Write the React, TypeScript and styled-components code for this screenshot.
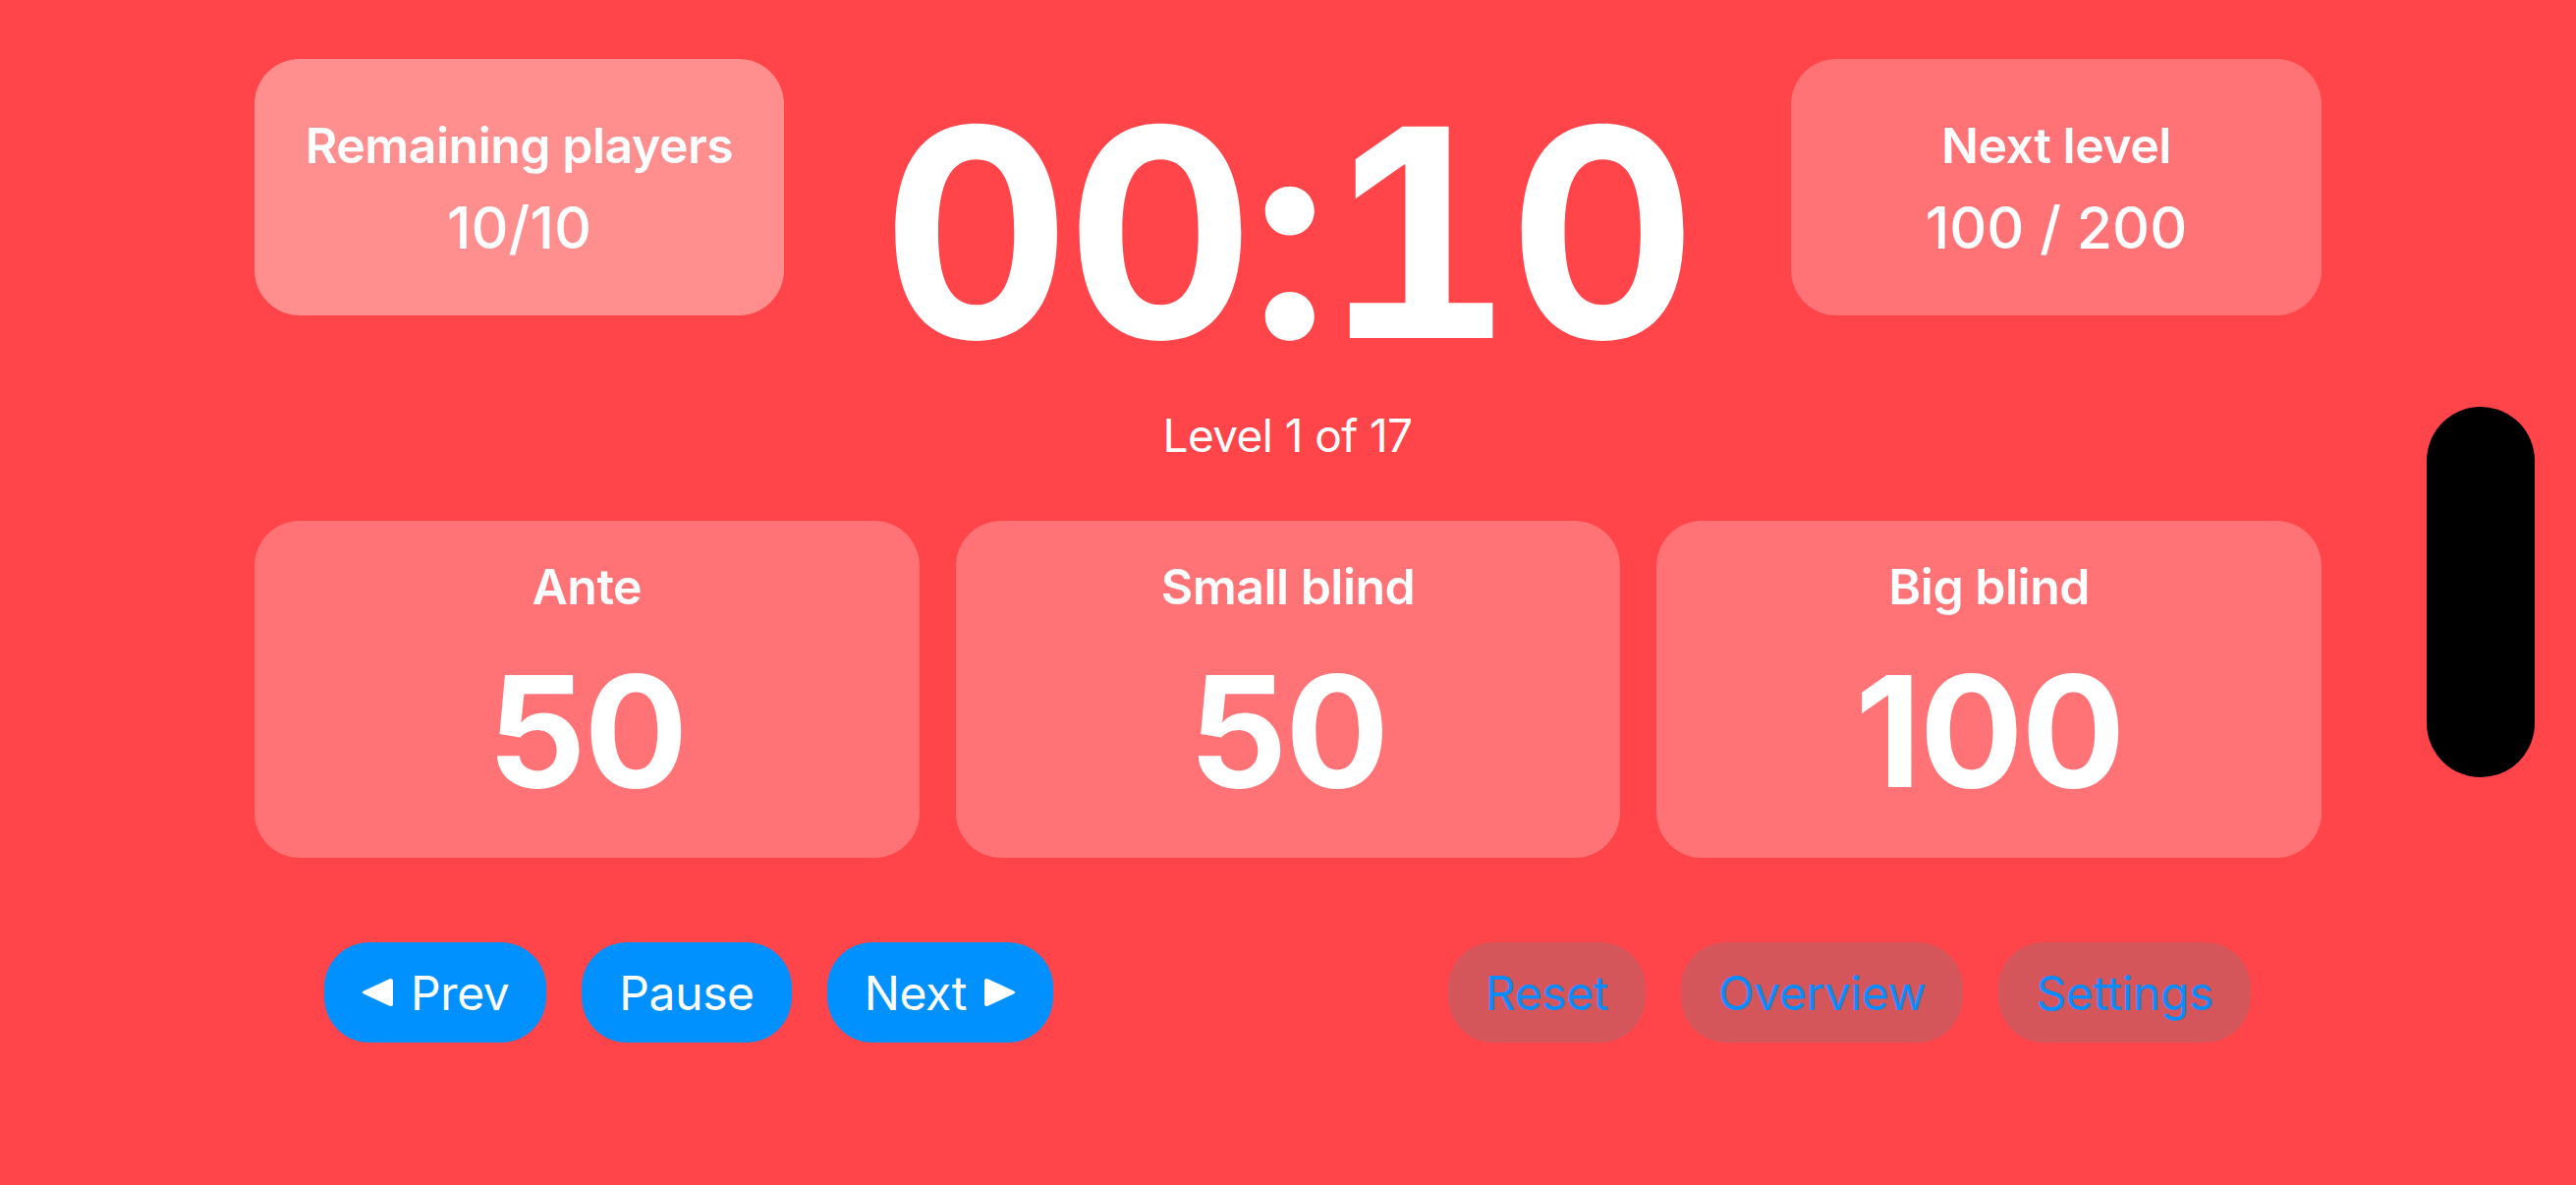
import React from "react";
import styled, { createGlobalStyle } from "styled-components";

const GlobalStyle = createGlobalStyle`
  html, body {
    margin: 0;
    padding: 0;
    background: #ff444a;
  }
  * {
    box-sizing: border-box;
  }
`;

const Screen = styled.div`
  position: relative;
  width: 2622px;
  height: 1206px;
  overflow: hidden;
  background: #ff444a;
  color: #ffffff;
  font-family: Inter, "Noto Sans", sans-serif;
  padding: 60px 259px 0;
  display: flex;
  flex-direction: column;
`;

const TopRow = styled.div`
  display: grid;
  grid-template-columns: 539px 1fr 540px;
  align-items: start;
`;

const InfoCard = styled.div<{ $light?: boolean }>`
  height: 261px;
  border-radius: 46px;
  background: ${(p) => (p.$light ? "#ff8e8e" : "#ff7275")};
  display: flex;
  flex-direction: column;
  align-items: center;
  padding-top: 63px;
`;

const InfoLabel = styled.div`
  font-size: 50px;
  font-weight: 600;
  line-height: 1;
  letter-spacing: -0.5px;
`;

const InfoValue = styled.div`
  margin-top: 29px;
  font-size: 59px;
  font-weight: 500;
  line-height: 1;
`;

const Center = styled.div`
  display: flex;
  flex-direction: column;
  align-items: center;
`;

const Timer = styled.div`
  margin-top: 28px;
  font-size: 296px;
  font-weight: 700;
  line-height: 1;
  letter-spacing: -4px;
  font-variant-numeric: tabular-nums;
`;

const LevelText = styled.div`
  margin-top: 36px;
  font-size: 46px;
  font-weight: 400;
  line-height: 1;
  letter-spacing: -0.6px;
`;

const BlindRow = styled.div`
  margin-top: 64px;
  display: grid;
  grid-template-columns: repeat(3, 1fr);
  gap: 37px;
`;

const BlindCard = styled.div`
  height: 343px;
  border-radius: 46px;
  background: #ff7275;
  display: flex;
  flex-direction: column;
  align-items: center;
  padding-top: 42px;
`;

const BlindLabel = styled.div`
  font-size: 50px;
  font-weight: 600;
  line-height: 1;
  letter-spacing: -0.5px;
`;

const BlindValue = styled.div`
  margin-top: 44px;
  font-size: 157px;
  font-weight: 700;
  line-height: 1;
  letter-spacing: -2px;
`;

const ButtonRow = styled.div`
  margin-top: 86px;
  padding: 0 72px 0 71px;
  display: flex;
  justify-content: space-between;
`;

const ButtonGroup = styled.div`
  display: flex;
  gap: 36px;
`;

const PillButton = styled.button<{ $muted?: boolean }>`
  height: 102px;
  padding: 0 38px;
  border: none;
  border-radius: 46px;
  display: flex;
  align-items: center;
  gap: 18px;
  font-family: Inter, "Noto Sans", sans-serif;
  font-size: 48px;
  font-weight: 400;
  letter-spacing: -0.4px;
  background: ${(p) => (p.$muted ? "#d4565b" : "#0091ff")};
  color: ${(p) => (p.$muted ? "#0a8cff" : "#ffffff")};
`;

const Island = styled.div`
  position: absolute;
  left: 2470px;
  top: 414px;
  width: 110px;
  height: 377px;
  border-radius: 55px;
  background: #000000;
`;

const Triangle = ({ dir }: { dir: "left" | "right" }) => (
  <svg
    width="32"
    height="30"
    viewBox="0 0 32 30"
    style={{ transform: dir === "right" ? "scaleX(-1)" : undefined }}
  >
    <path
      d="M28 1.5 C30.2 0.2 32 1.2 32 3.6 V26.4 C32 28.8 30.2 29.8 28 28.5 L2.2 16.6 C0.2 15.6 0.2 14.4 2.2 13.4 Z"
      fill="#ffffff"
    />
  </svg>
);

const blinds = [
  { label: "Ante", value: "50" },
  { label: "Small blind", value: "50" },
  { label: "Big blind", value: "100" },
];

export default function App() {
  return (
    <>
      <GlobalStyle />
      <Screen>
        <TopRow>
          <InfoCard $light>
            <InfoLabel>Remaining players</InfoLabel>
            <InfoValue>10/10</InfoValue>
          </InfoCard>
          <Center>
            <Timer>00:10</Timer>
            <LevelText>Level 1 of 17</LevelText>
          </Center>
          <InfoCard>
            <InfoLabel>Next level</InfoLabel>
            <InfoValue>100 / 200</InfoValue>
          </InfoCard>
        </TopRow>

        <BlindRow>
          {blinds.map((b) => (
            <BlindCard key={b.label}>
              <BlindLabel>{b.label}</BlindLabel>
              <BlindValue>{b.value}</BlindValue>
            </BlindCard>
          ))}
        </BlindRow>

        <ButtonRow>
          <ButtonGroup>
            <PillButton>
              <Triangle dir="left" />
              Prev
            </PillButton>
            <PillButton>Pause</PillButton>
            <PillButton>
              Next
              <Triangle dir="right" />
            </PillButton>
          </ButtonGroup>
          <ButtonGroup>
            <PillButton $muted>Reset</PillButton>
            <PillButton $muted>Overview</PillButton>
            <PillButton $muted>Settings</PillButton>
          </ButtonGroup>
        </ButtonRow>

        <Island />
      </Screen>
    </>
  );
}
